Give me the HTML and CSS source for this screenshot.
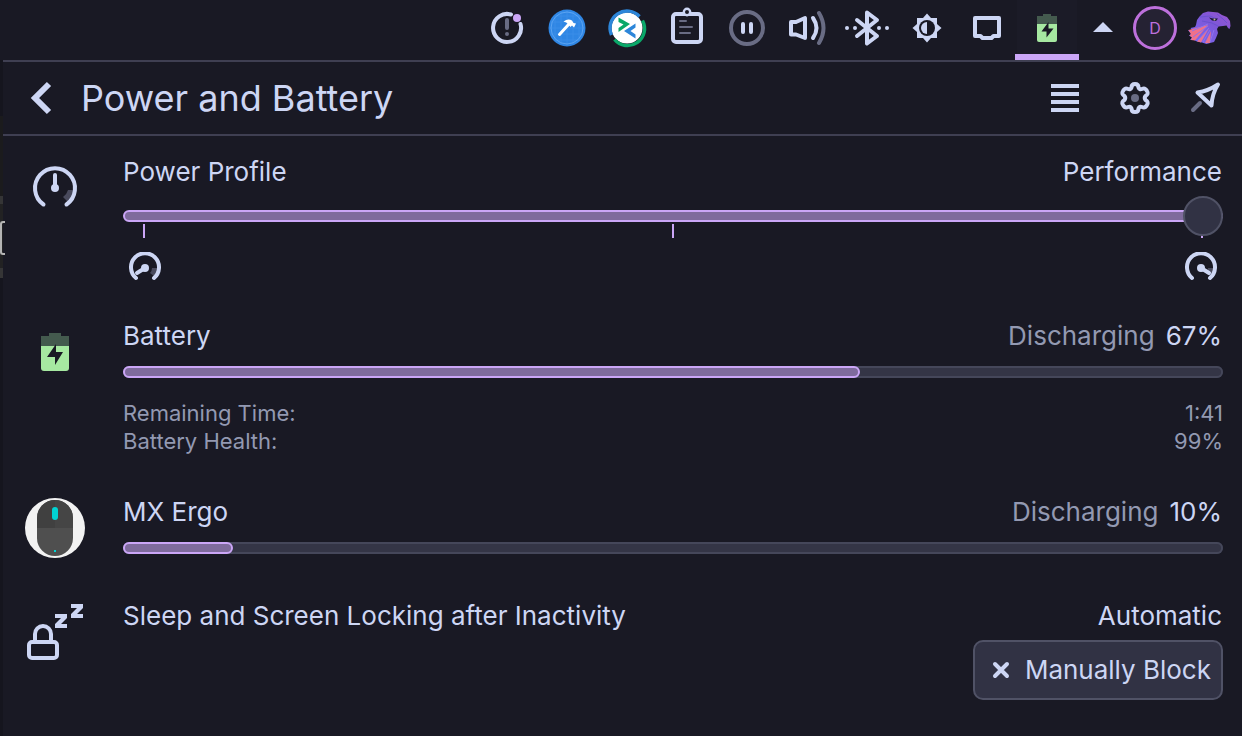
FILE: index.html
```html
<!DOCTYPE html>
<html lang="en">
<head>
    <meta charset="UTF-8">
    <title>Power and Battery</title>
    <link rel="stylesheet" href="styles.css">
</head>
<body>
<!-- system tray -->
<nav class="tray">
    <button class="tray-item" aria-label="Notifications">
        <svg viewBox="0 0 44 44">
            <path class="line" d="M26 8.500A14 14 0 1 0 35.500 18"/>
            <path class="dim" d="M22 14v8" stroke-width="4"/>
            <circle class="dim-fill" cx="22" cy="28" r="2"/>
            <circle class="accent-fill" cx="32" cy="12" r="4"/>
        </svg>
    </button>
    <button class="tray-item" aria-label="Builder">
        <svg viewBox="0 0 44 44">
            <circle cx="22" cy="22" r="18.500" fill="#2f86e4"/>
            <path d="M10 10v24M16 6v32M22 5v34M28 6v32M34 10v24M10 10h24M6 16h32M5 22h34M6 28h32M10 34h24" stroke="#3b8de8" stroke-width="1"/>
            <circle cx="22" cy="22" r="16" fill="none" stroke="#5ba4f2" stroke-width="1"/>
            <path d="M14.500 28.500L24 18" stroke="#fff" stroke-width="3" stroke-linecap="round"/>
            <path d="M18.500 15.500Q23 12 27 14.500L28.500 17L31 17.500L29 21.500L27 19.500L25.500 21L22 17Q21 16 18.500 15.500Z" fill="#fff"/>
        </svg>
    </button>
    <button class="tray-item" aria-label="Remote session">
        <svg viewBox="0 0 44 44">
            <circle cx="22" cy="22" r="15.500" fill="#fff"/>
            <path d="M6.500 29A17 17 0 0 1 34.500 10.500" fill="none" stroke="#2d86d9" stroke-width="3.400"/>
            <path d="M37.500 14.500A17 17 0 0 1 9.500 33.500" fill="none" stroke="#0aa869" stroke-width="3.400"/>
            <path d="M13.500 11.500L25 18L13.500 26V22L18.500 18.500L13.500 16Z" fill="#0aa869"/>
            <path d="M30.500 17.500V21.500L25.500 25L30.500 28.500V32.500L19 25Z" fill="#2d86d9"/>
        </svg>
    </button>
    <button class="tray-item" aria-label="Clipboard">
        <svg viewBox="0 0 44 44">
            <rect class="line" x="8" y="8" width="28" height="28" rx="3"/>
            <circle cx="22" cy="6" r="3.200" fill="#191924" stroke="#cdd6f4" stroke-width="2.400"/>
            <path class="dim" d="M15 15h6M15 21h12M15 27h10" stroke-width="2"/>
        </svg>
    </button>
    <button class="tray-item" aria-label="Pause">
        <svg viewBox="0 0 44 44">
            <circle class="dim" cx="22" cy="22" r="16" stroke-width="4"/>
            <path class="line" d="M18 18v8M26 18v8"/>
        </svg>
    </button>
    <button class="tray-item" aria-label="Volume">
        <svg viewBox="0 0 44 44">
            <path class="line join" d="M6 16h5L20 12v20L11 28.500H6Z"/>
            <path class="line" d="M28 12Q35 22 28 32"/>
            <path class="dim" d="M34 7Q43 22 34 37" stroke-width="4"/>
        </svg>
    </button>
    <button class="tray-item" aria-label="Bluetooth">
        <svg viewBox="0 0 44 44">
            <path class="line join" d="M12 14L32 30L22 37.500V6.500L32 14L12 30"/>
            <circle class="fill" cx="2" cy="22" r="2"/><circle class="fill" cx="10" cy="22" r="2"/>
            <circle class="fill" cx="34" cy="22" r="2"/><circle class="fill" cx="42" cy="22" r="2"/>
        </svg>
    </button>
    <button class="tray-item" aria-label="Brightness">
        <svg viewBox="0 0 44 44">
            <path class="fill" d="M22 7.500L26 12H32V18L36.500 22L32 26V32H26L22 36.500L18 32H12V26L7.500 22L12 18V12H18Z"/>
            <circle cx="22" cy="22" r="8" fill="#191924"/>
            <path class="fill" d="M22 16A6 6 0 0 0 22 28Z"/>
        </svg>
    </button>
    <button class="tray-item" aria-label="Display">
        <svg viewBox="0 0 44 44">
            <path class="line join" d="M10 12H34V30H28.500L26.500 32H17.500L15.500 30H10Z"/>
        </svg>
    </button>
    <button class="tray-item active" aria-label="Power and Battery">
        <svg viewBox="0 0 44 44">
            <path d="M12 10H18V8H26V10H32V18H12Z" fill="#445a4e"/>
            <path d="M12 18H32V34Q32 36 30 36H14Q12 36 12 34Z" fill="#a6e8a1"/>
            <path d="M23.500 16V22.500H28.500L21.500 31.500V25.500H16.500Z" fill="#191924"/>
        </svg>
    </button>
    <button class="tray-item small" aria-label="Show hidden icons">
        <svg viewBox="0 0 44 44"><path class="fill" d="M22 16L32 26H12Z"/></svg>
    </button>
    <button class="tray-item small" aria-label="User D"><span class="avatar">D</span></button>
    <button class="tray-item eagle" aria-label="Eagle">
        <svg viewBox="0 0 44 44">
            <defs>
                <linearGradient id="head" x1="0" y1="1" x2="1" y2="0">
                    <stop offset="0" stop-color="#7a6cf6"/>
                    <stop offset="0.600" stop-color="#7d57d8"/>
                    <stop offset="1" stop-color="#9d55cf"/>
                </linearGradient>
            </defs>
            <path d="M9 19L10 14L12.500 10.500L16 7L21 5.500L31 6.500L35 9L40 11L43 15L43.500 20L42.500 23L41 22L39.500 19.500L36 20L31.500 20.500L30 23L31 27L29 32L27 36L23 37L19.500 38L15 36.500L10 35.500L7 34L3 34L5 31.500L2 29.500L4 28L1 24L5 24L3.500 22L8 21Z" fill="url(#head)"/>
            <!-- feathers of the neck -->
            <path d="M21 19L1.500 24L4 28L2.500 29.500L5 31.500L4 34L8 34.500Z" fill="#f0708a"/>
            <path d="M22 22L10 35.500L14 36.500ZM24 25L18 37L23 37Z" fill="#e8728f"/>
            <path d="M21 18L5 25M21 20L6 31M22 22L11 34M23 24L16 36M27 24L23 36" stroke="#8b72ee" stroke-width="1" fill="none"/>
            <path d="M13 11L23 10L30 13M15 15L25 17L31 20M30 8L36 13L40 17" stroke="#6a52cf" stroke-width="1" fill="none"/>
            <path d="M22 11.500L26 12.500H31L29 15L25 14.500Z" fill="#1f1b3c"/>
            <circle cx="27.500" cy="13.500" r="1" fill="#b9b58b"/>
        </svg>
    </button>
</nav>

<div class="popup">
    <header class="header">
        <button class="back" aria-label="Back">
            <svg viewBox="0 0 44 44"><path d="M31 8L17 22L31 36" fill="none" stroke="#cdd6f4" stroke-width="6"/></svg>
        </button>
        <h1>Power and Battery</h1>
        <button class="tool" aria-label="Menu">
            <svg viewBox="0 0 44 44"><path class="fill" d="M8 8h28v4H8zM8 16h28v4H8zM8 24h28v4H8zM8 32h28v4H8z"/></svg>
        </button>
        <button class="tool" aria-label="Configure">
            <svg viewBox="0 0 44 44">
                <path class="line join" d="M18.500 11.500Q18.500 8 22 8Q25.500 8 25.500 11.500Q26.500 14 29 13Q32 11.500 34 15Q36 18 32.500 20Q31 22 32.500 24Q36 26 34 29Q32 32.500 29 31Q26.500 30 25.500 32.500Q25.500 36 22 36Q18.500 36 18.500 32.500Q17.500 30 15 31Q12 32.500 10 29Q8 26 11.500 24Q13 22 11.500 20Q8 18 10 15Q12 11.500 15 13Q17.500 14 18.500 11.500Z"/>
                <circle class="dim-fill" cx="22" cy="22" r="4"/>
            </svg>
        </button>
        <button class="tool" aria-label="Keep open">
            <svg viewBox="0 0 44 44">
                <path class="dim" d="M10 34L17 27" stroke-width="4"/>
                <path class="line join" d="M14.500 16.500Q25 15 35 8.500Q29 18 28.500 29.500Z"/>
            </svg>
        </button>
    </header>

    <main class="rows">
        <section class="row">
            <svg class="row-icon" viewBox="0 0 64 64">
                <path d="M45 34h6q-1 7-6 12l-5-5q4-3 5-7Z" fill="#494a5d"/>
                <path class="line" d="M20.500 48.500A20 20 0 1 1 43.500 48.500"/>
                <path class="line" d="M32 19V31"/>
                <circle class="fill" cx="32" cy="32" r="4"/>
            </svg>
            <div class="content">
                <div class="title"><label for="profile">Power Profile</label><output for="profile">Performance</output></div>
                <input class="slider" id="profile" type="range" min="0" max="2" value="2">
                <div class="ticks"><i></i><i></i><i></i></div>
                <div class="gauges">
                    <svg viewBox="0 0 32 32">
                        <path d="M23 16h5q0 5-3 8l-4-3q2-2 2-5Z" fill="#494a5d"/>
                        <path class="line" d="M7 26A14 14 0 1 1 25 26"/>
                        <path class="line" d="M16 16L8 21"/>
                        <circle class="fill" cx="16" cy="16" r="4"/>
                    </svg>
                    <svg viewBox="0 0 32 32">
                        <path d="M23 16h5q0 5-3 8l-4-3q2-2 2-5Z" fill="#494a5d"/>
                        <path class="line" d="M7 26A14 14 0 1 1 25 26"/>
                        <path class="line" d="M16 16L24 21"/>
                        <circle class="fill" cx="16" cy="16" r="4"/>
                    </svg>
                </div>
            </div>
        </section>

        <section class="row">
            <svg class="row-icon" viewBox="0 0 64 64">
                <path d="M18 16H26V13H38V16H46V26H18Z" fill="#445a4e"/>
                <path d="M18 26H46V48Q46 51 43 51H21Q18 51 18 48Z" fill="#a6e8a1"/>
                <path d="M33 24V32H40L32 45V37H24Z" fill="#191924"/>
            </svg>
            <div class="content">
                <div class="title"><label for="battery">Battery</label><span><span class="state">Discharging</span>67%</span></div>
                <progress id="battery" max="100" value="67"></progress>
                <dl class="details">
                    <div><dt>Remaining Time:</dt><dd>1:41</dd></div>
                    <div><dt>Battery Health:</dt><dd>99%</dd></div>
                </dl>
            </div>
        </section>

        <section class="row">
            <svg class="row-icon" viewBox="0 0 64 64">
                <circle cx="32" cy="32" r="30" fill="#f2f2f2"/>
                <rect x="14" y="4" width="36" height="56" rx="18" fill="#4f4f4f"/>
                <path d="M14 32V22A18 18 0 0 1 32 4V32Z" fill="#404040"/>
                <path d="M32 4A18 18 0 0 1 50 22V32H32Z" fill="#454545"/>
                <rect x="29" y="11" width="6" height="13" rx="3" fill="#00d4d4"/>
                <rect x="31" y="54" width="2" height="2" fill="#00d4d4"/>
            </svg>
            <div class="content">
                <div class="title"><label for="mouse">MX Ergo</label><span><span class="state">Discharging</span>10%</span></div>
                <progress id="mouse" max="100" value="10"></progress>
            </div>
        </section>

        <section class="row">
            <svg class="row-icon" viewBox="0 0 64 64">
                <rect class="line" x="6" y="42" width="28" height="16" rx="3"/>
                <path class="line" d="M12 41V34A8 8 0 0 1 28 34V41"/>
                <path class="fill" d="M32 14H44V18L38 24H44V28H32V24L38 18H32ZM48 4H60V8L54 14H60V18H48V14L54 8H48Z"/>
            </svg>
            <div class="content">
                <div class="title"><span>Sleep and Screen Locking after Inactivity</span><span>Automatic</span></div>
                <button class="block">
                    <svg viewBox="0 0 20 20"><path class="line" d="M4 4L16 16M16 4L4 16"/></svg>
                    Manually Block
                </button>
            </div>
        </section>
    </main>
</div>
</body>
</html>
```
FILE: styles.css
```css
*{
    margin:0;
    padding:0;
    box-sizing:border-box;
}
body{
    min-height:100vh;
    display:flex;
    flex-direction:column;
    background:#191924;
    color:#cdd6f4;
    font:26px/32px Inter,"Noto Sans",sans-serif;
}
button{
    border:0;
    background:none;
    color:inherit;
    font:inherit;
}
svg{
    display:block;
    flex:none;
}
/* shared icon strokes */
.line{
    fill:none;
    stroke:#cdd6f4;
    stroke-width:4;
    stroke-linecap:round;
}
.join{
    stroke-linejoin:round;
}
.dim{
    fill:none;
    stroke:#696c84;
    stroke-linecap:round;
}
.fill{
    fill:#cdd6f4;
}
.dim-fill{
    fill:#696c84;
}
.accent-fill{
    fill:#cba6f7;
}
/* tray */
.tray{
    height:60px;
    padding-right:5px;
    display:flex;
    justify-content:flex-end;
}
.tray-item{
    width:60px;
    height:60px;
    padding-bottom:4px;
    display:flex;
    align-items:center;
    justify-content:center;
}
.tray-item svg{
    width:44px;
    height:44px;
}
.tray-item.small{
    width:52px;
}
.tray-item.eagle{
    width:56px;
}
.tray-item.active{
    position:relative;
    background:#1b1b27;
}
.tray-item.active::after{
    content:"";
    position:absolute;
    left:-2px;
    right:-2px;
    bottom:0;
    height:6px;
    background:#cba6f7;
}
.avatar{
    width:44px;
    height:44px;
    flex:none;
    border:3px solid #bd70dc;
    border-radius:50%;
    background:#252233;
    color:#bd70dc;
    font-size:16px;
    line-height:38px;
    text-align:center;
}
/* popup */
.popup{
    flex:1;
    position:relative;
    border-left:3px solid #15151e;
}
/* the window behind shows along the left edge */
.popup::before{
    content:"";
    position:absolute;
    left:-3px;
    top:56px;
    width:3px;
    height:162px;
    background:linear-gradient(#1b1b1d 80px,#353536 80px,#353536 88px,#222223 88px,#222223 152px,#353536 152px);
}
.popup::after{
    content:"";
    position:absolute;
    left:-3px;
    top:161px;
    width:3px;
    height:30px;
    border:2px solid #b4b4b4;
    border-right:0;
    border-radius:3px 0 0 3px;
}
.header{
    height:76px;
    padding:0 7px 0 8px;
    display:flex;
    align-items:center;
    border-top:2px solid #3f3f52;
    border-bottom:2px solid #3f3f52;
}
h1{
    flex:1;
    font-size:36px;
    line-height:44px;
    font-weight:400;
}
.header svg{
    width:44px;
    height:44px;
}
.back{
    width:70px;
    padding-left:7px;
}
.tool{
    width:60px;
    margin-left:10px;
    padding:0 8px;
}
.rows{
    padding:20px 19px 36px 20px;
    display:flex;
    flex-direction:column;
    gap:40px;
}
.row{
    display:flex;
    gap:36px;
}
.row-icon{
    width:64px;
    height:64px;
}
.content{
    flex:1;
    display:flex;
    flex-direction:column;
}
.title{
    padding-right:1px;
    display:flex;
    justify-content:space-between;
}
.state{
    margin-right:11px;
    color:#9399b2;
}
/* slider */
.slider{
    -webkit-appearance:none;
    appearance:none;
    position:relative;
    z-index:1;
    height:40px;
    margin-top:8px;
    background:none;
}
.slider::-webkit-slider-runnable-track{
    height:12px;
    border:2px solid #cba6f7;
    border-radius:6px;
    background:#7f6b9d;
}
.slider::-webkit-slider-thumb{
    -webkit-appearance:none;
    width:40px;
    height:40px;
    margin-top:-16px;
    margin-right:-2px;
    position:relative;
    left:2px;
    border:2px solid #505266;
    border-radius:50%;
    background:#313244;
}
.ticks{
    height:14px;
    margin-top:-12px;
    padding:0 20px;
    display:flex;
    justify-content:space-between;
}
.ticks i{
    width:2px;
    background:#cba6f7;
}
.gauges{
    height:28px;
    margin-top:14px;
    padding:0 6px;
    display:flex;
    justify-content:space-between;
}
.gauges svg{
    width:32px;
    height:32px;
}
/* battery bars */
progress{
    -webkit-appearance:none;
    appearance:none;
    width:100%;
    height:12px;
    margin-top:14px;
    border:0;
}
progress::-webkit-progress-bar{
    border-radius:6px;
    background:#343546;
    box-shadow:inset 0 0 0 2px #45475a;
}
progress::-webkit-progress-value{
    border:2px solid #cba6f7;
    border-radius:6px;
    background:#7f6b9d;
}
.details{
    margin:21px 0 1px;
    color:#9399b2;
    font-size:22px;
    line-height:28px;
}
.details div{
    display:flex;
    justify-content:space-between;
}
.block{
    align-self:flex-end;
    height:60px;
    margin-top:8px;
    padding:0 10px 0 16px;
    display:flex;
    align-items:center;
    gap:14px;
    border:2px solid #505266;
    border-radius:10px;
    background:#313244;
}
.block svg{
    width:20px;
    height:20px;
}
```
